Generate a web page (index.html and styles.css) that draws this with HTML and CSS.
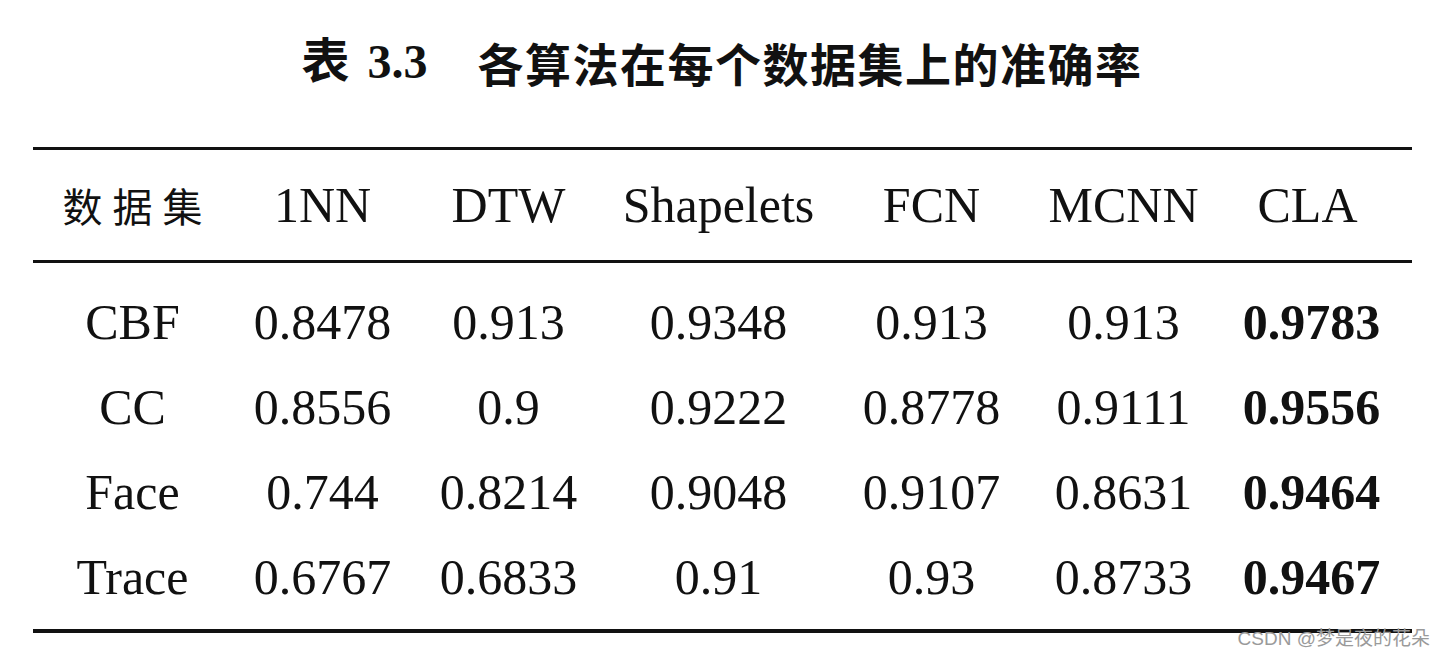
FILE: index.html
```html
<!DOCTYPE html>
<html>
  <head>
    <title>表 3.3 各算法在每个数据集上的准确率</title>
    <link rel="stylesheet" href="styles.css">
  </head>
  <body>
    <div class="page">
      <h1 class="caption">
        <span class="caption-num">表 3.3</span>
        <span class="caption-text">各算法在每个数据集上的准确率</span>
      </h1>

      <div class="result-table">
        <div class="row head-row">
          <div class="cell cjk">数据集</div>
          <div class="cell">1NN</div>
          <div class="cell">DTW</div>
          <div class="cell">Shapelets</div>
          <div class="cell">FCN</div>
          <div class="cell">MCNN</div>
          <div class="cell">CLA</div>
        </div>

        <div class="body-rows">
          <div class="row">
            <div class="cell">CBF</div>
            <div class="cell">0.8478</div>
            <div class="cell">0.913</div>
            <div class="cell">0.9348</div>
            <div class="cell">0.913</div>
            <div class="cell">0.913</div>
            <div class="cell best">0.9783</div>
          </div>
          <div class="row">
            <div class="cell">CC</div>
            <div class="cell">0.8556</div>
            <div class="cell">0.9</div>
            <div class="cell">0.9222</div>
            <div class="cell">0.8778</div>
            <div class="cell">0.9111</div>
            <div class="cell best">0.9556</div>
          </div>
          <div class="row">
            <div class="cell">Face</div>
            <div class="cell">0.744</div>
            <div class="cell">0.8214</div>
            <div class="cell">0.9048</div>
            <div class="cell">0.9107</div>
            <div class="cell">0.8631</div>
            <div class="cell best">0.9464</div>
          </div>
          <div class="row">
            <div class="cell">Trace</div>
            <div class="cell">0.6767</div>
            <div class="cell">0.6833</div>
            <div class="cell">0.91</div>
            <div class="cell">0.93</div>
            <div class="cell">0.8733</div>
            <div class="cell best">0.9467</div>
          </div>
        </div>
      </div>

      <div class="watermark">CSDN @梦是夜的花朵</div>
    </div>
  </body>
</html>
```

FILE: styles.css
```css
body {
  margin: 0;
  background: #ffffff;
  color: #111111;
  font-family: "Liberation Serif", "Noto Sans CJK SC", serif;
}

.page {
  position: relative;
  width: 1444px;
  height: 660px;
  display: flex;
  flex-direction: column;
  align-items: center;
}

.caption {
  margin: 32px 0 0 0;
  height: 60px;
  display: flex;
  align-items: center;
  font-weight: bold;
  font-size: 46px;
  line-height: 60px;
}

.caption-num {
  font-family: "Liberation Serif", "Noto Sans CJK SC", serif;
  font-size: 48px;
  word-spacing: 6px;
  margin-right: 50px;
}

.caption-text {
  font-family: "Noto Sans CJK SC", sans-serif;
  letter-spacing: 1.5px;
}

.result-table {
  margin-top: 55px;
  width: 1379px;
  border-top: 3px solid #111111;
  border-bottom: 4px solid #111111;
}

.row {
  display: grid;
  grid-template-columns: 200px 180px 192px 228px 198px 186px 182px;
  height: 85px;
  align-items: center;
}

.head-row {
  height: 110px;
  border-bottom: 3px solid #111111;
}

.body-rows {
  padding: 16px 0 10px 0;
}

.cell {
  text-align: center;
  font-size: 50px;
  line-height: 60px;
}

.cjk {
  font-family: "Noto Sans CJK SC", sans-serif;
  font-size: 40px;
  letter-spacing: 10px;
  padding-left: 10px;
}

.best {
  font-weight: bold;
  padding-left: 8px;
}

.watermark {
  position: absolute;
  right: 14px;
  bottom: 10px;
  font-family: "Liberation Sans", "Noto Sans CJK SC", sans-serif;
  font-size: 19px;
  color: #9a9a9a;
}
```
